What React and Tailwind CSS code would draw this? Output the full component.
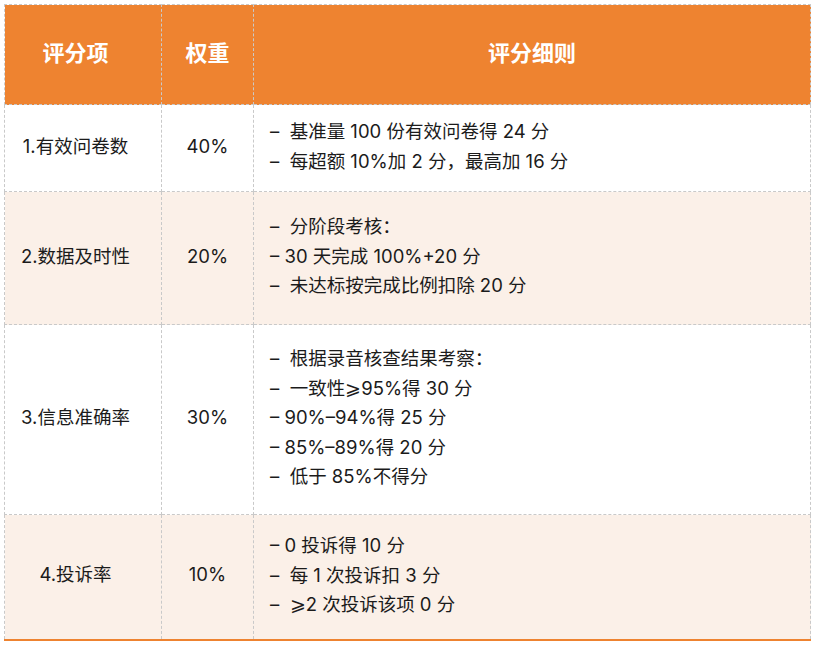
const rows = [
  {
    item: "1.有效问卷数",
    weight: "40%",
    h: "h-[87px]",
    alt: false,
    rules: ["–  基准量 100 份有效问卷得 24 分", "–  每超额 10%加 2 分，最高加 16 分"],
  },
  {
    item: "2.数据及时性",
    weight: "20%",
    h: "h-[133px]",
    alt: true,
    rules: ["–  分阶段考核：", "– 30 天完成 100%+20 分", "–  未达标按完成比例扣除 20 分"],
  },
  {
    item: "3.信息准确率",
    weight: "30%",
    h: "h-[190px]",
    alt: false,
    rules: [
      "–  根据录音核查结果考察：",
      "–  一致性⩾95%得 30 分",
      "– 90%–94%得 25 分",
      "– 85%–89%得 20 分",
      "–  低于 85%不得分",
    ],
  },
  {
    item: "4.投诉率",
    weight: "10%",
    h: "h-[125px]",
    alt: true,
    rules: ["– 0 投诉得 10 分", "–  每 1 次投诉扣 3 分", "–  ⩾2 次投诉该项 0 分"],
  },
];

const cell = "border border-dashed border-[#c9c9c9] pb-[3px]";

export default function App() {
  return (
    <div className="bg-white p-1 font-['Inter','Noto_Sans_CJK_SC',sans-serif] text-[#1b1b1b]">
      <table className="w-[807px] table-fixed border-collapse">
        <colgroup>
          <col className="w-[157px]" />
          <col className="w-[92px]" />
          <col />
        </colgroup>
        <thead>
          <tr className="h-[100px] bg-[#ee8330] text-[22px] font-bold text-white">
            <th className={`${cell} pl-2 pr-[23px] text-center`}>评分项</th>
            <th className={`${cell} text-center`}>权重</th>
            <th className={`${cell} text-center`}>评分细则</th>
          </tr>
        </thead>
        <tbody className="text-[18.5px]">
          {rows.map((r, i) => (
            <tr
              key={r.item}
              className={`${r.h} ${r.alt ? "bg-[#fbf0e8]" : "bg-white"} ${i === rows.length - 1 ? "border-b-2 border-solid border-b-[#ee8330]" : ""}`}
            >
              <td className={`${cell} pl-2 pr-[23px] text-center`}>{r.item}</td>
              <td className={`${cell} text-center`}>{r.weight}</td>
              <td className={`${cell} pl-4 leading-[29.5px]`}>
                {r.rules.map((t) => (
                  <div key={t} className="whitespace-pre">{t}</div>
                ))}
              </td>
            </tr>
          ))}
        </tbody>
      </table>
    </div>
  );
}
